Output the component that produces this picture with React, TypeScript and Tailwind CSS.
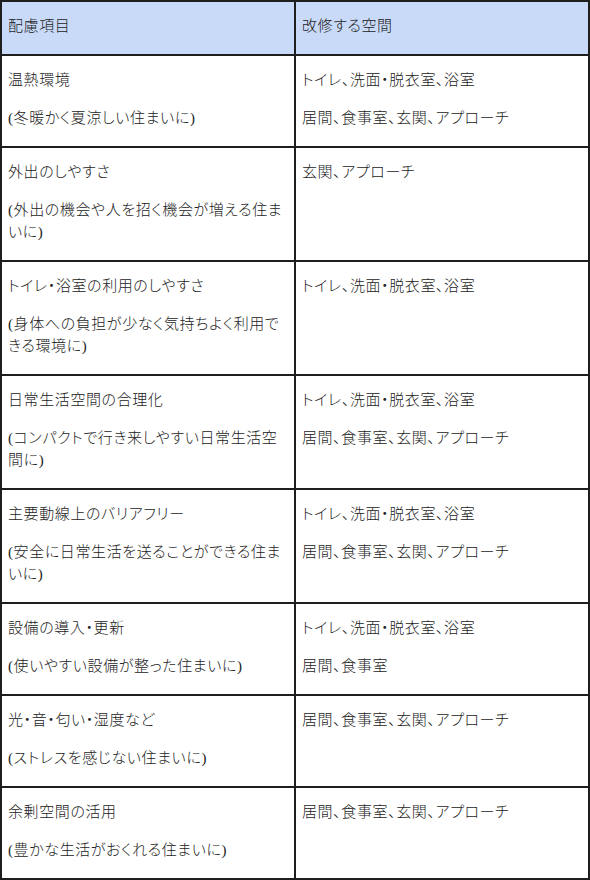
const rows: { item: string[]; space: string[] }[] = [
  { item: ['温熱環境', '(冬暖かく夏涼しい住まいに)'], space: ['トイレ、洗面・脱衣室、浴室', '居間、食事室、玄関、アプローチ'] },
  { item: ['外出のしやすさ', '(外出の機会や人を招く機会が増える住ま\nいに)'], space: ['玄関、アプローチ'] },
  { item: ['トイレ・浴室の利用のしやすさ', '(身体への負担が少なく気持ちよく利用で\nきる環境に)'], space: ['トイレ、洗面・脱衣室、浴室'] },
  { item: ['日常生活空間の合理化', '(コンパクトで行き来しやすい日常生活空\n間に)'], space: ['トイレ、洗面・脱衣室、浴室', '居間、食事室、玄関、アプローチ'] },
  { item: ['主要動線上のバリアフリー', '(安全に日常生活を送ることができる住ま\nいに)'], space: ['トイレ、洗面・脱衣室、浴室', '居間、食事室、玄関、アプローチ'] },
  { item: ['設備の導入・更新', '(使いやすい設備が整った住まいに)'], space: ['トイレ、洗面・脱衣室、浴室', '居間、食事室'] },
  { item: ['光・音・匂い・湿度など', '(ストレスを感じない住まいに)'], space: ['居間、食事室、玄関、アプローチ'] },
  { item: ['余剰空間の活用', '(豊かな生活がおくれる住まいに)'], space: ['居間、食事室、玄関、アプローチ'] },
]

function Cell({ lines, head }: { lines: string[]; head?: boolean }) {
  return (
    <td className={`w-[294px] align-top border-2 border-[#1e1e1e] pl-[6px] pr-[2px] pt-[13px] pb-[1px] ${head ? 'bg-[#c9daf8]' : ''}`}>
      {lines.map((l, i) => (
        <p key={i} className="mb-4 leading-[22px] whitespace-pre-line">{l}</p>
      ))}
    </td>
  )
}

export default function App() {
  return (
    <div
      className="w-[590px] h-[880px] bg-white text-[15px] text-[#222] font-light tracking-[0.6px] overflow-hidden [font-feature-settings:'palt']"
      style={{ fontFamily: '"Liberation Serif", "Noto Sans CJK JP", serif' }}
    >
      <table className="w-[590px] border-collapse table-fixed">
        <tbody>
          <tr>
            <Cell head lines={['配慮項目']} />
            <Cell head lines={['改修する空間']} />
          </tr>
          {rows.map((r, i) => (
            <tr key={i}>
              <Cell lines={r.item} />
              <Cell lines={r.space} />
            </tr>
          ))}
        </tbody>
      </table>
    </div>
  )
}
